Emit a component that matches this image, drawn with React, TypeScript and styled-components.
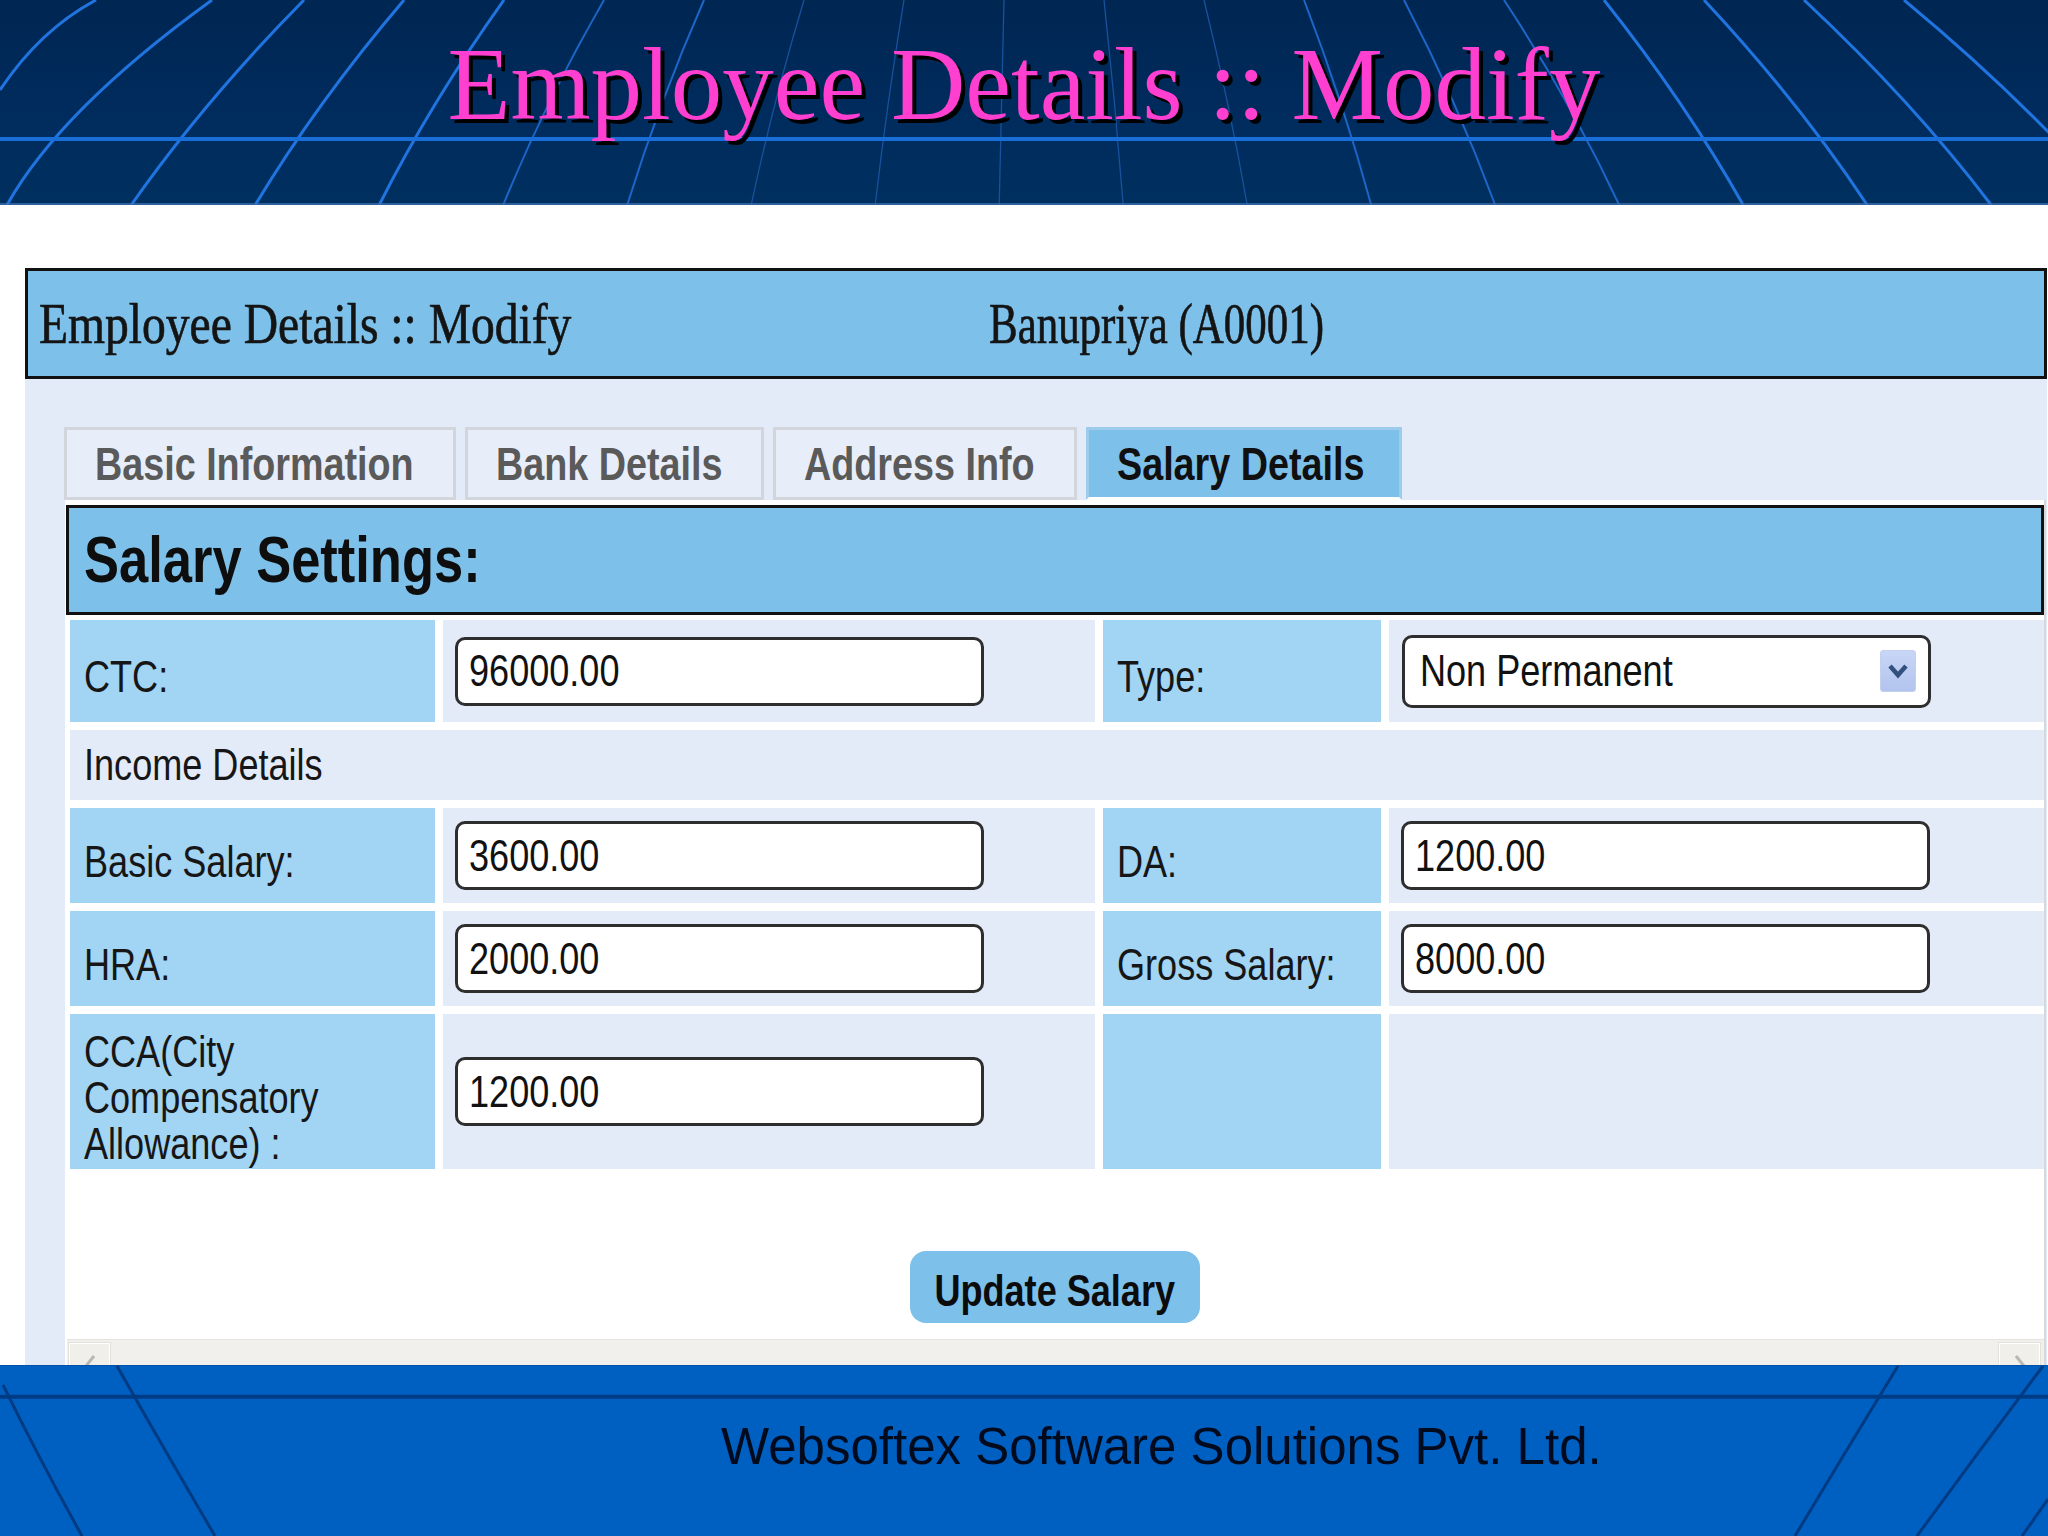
import React from 'react';
import styled, { createGlobalStyle } from 'styled-components';

const SANS = `"Liberation Sans", Arial, sans-serif`;
const SERIF = `"Liberation Serif", "Times New Roman", serif`;

const SKY = '#7dc0ea';
const LABEL_BG = '#a2d4f4';
const LAVENDER = '#e4ebf8';

const GlobalStyle = createGlobalStyle`
    html, body {
        margin: 0;
        padding: 0;
        background: #ffffff;
    }
    body {
        width: 2048px;
        height: 1536px;
        overflow: hidden;
    }
    * {
        box-sizing: border-box;
    }
`;

type Field = { label: string; value: string };

// the captured web page is stretched vertically, so its text is drawn narrower than the font
const Squeeze = styled.span<{ scale?: number; origin?: string }>`
    display: inline-block;
    white-space: nowrap;
    transform: scaleX(${(p) => p.scale ?? 0.82});
    transform-origin: ${(p) => p.origin ?? 'left center'};
`;

const headerLines = Array.from({ length: 17 }, (_, i) => i - 7).map((k) => {
    const top = 1004 + 100 * k;
    const bottom = 1024 + 1.24 * (top - 1024);
    const offset = top - 1024;
    const ctrl = (top + bottom) / 2 + offset * 0.02;
    const abs = Math.abs(offset);
    return {
        d: `M${top},0 Q${ctrl},102 ${bottom},205`,
        width: abs > 500 ? 3 : abs > 250 ? 2 : 1.3,
        color: abs > 500 ? '#1f74e0' : abs > 250 ? '#1c66c8' : '#18519c',
    };
});

const HeaderGrid = () => (
    <BandArt viewBox="0 0 2048 205" preserveAspectRatio="none">
        {headerLines.map((l) => (
            <path key={l.d} d={l.d} stroke={l.color} strokeWidth={l.width} fill="none" />
        ))}
        <path d="M212,0 Q60,110 7,205" stroke="#1f74e0" strokeWidth={3} fill="none" />
        <path d="M96,0 Q40,30 0,90" stroke="#1f74e0" strokeWidth={3} fill="none" />
        <line x1={0} y1={139} x2={2048} y2={139} stroke="#1a6ed8" strokeWidth={4} />
        <line x1={0} y1={204} x2={2048} y2={204} stroke="#3c6fb0" strokeWidth={1.5} />
    </BandArt>
);

const FooterLines = () => (
    <BandArt viewBox="0 0 2048 171" preserveAspectRatio="none">
        <line x1={0} y1={31} x2={2048} y2={31} stroke="#003c86" strokeWidth={4} />
        <path d="M3,19 Q40,95 82,171" stroke="#003a80" strokeWidth={3} fill="none" />
        <path d="M117,0 Q162,80 215,171" stroke="#003a80" strokeWidth={3} fill="none" />
        <path d="M1898,0 Q1848,82 1795,171" stroke="#003a80" strokeWidth={3} fill="none" />
        <path d="M2043,0 Q1980,84 1917,171" stroke="#003a80" strokeWidth={3} fill="none" />
        <path d="M2048,134 L2022,171" stroke="#003a80" strokeWidth={3} fill="none" />
    </BandArt>
);

const Chevron = () => (
    <svg width="22" height="18" viewBox="0 0 22 18">
        <polyline points="3,4 11,13 19,4" fill="none" stroke="#34507e" strokeWidth={4.5} strokeLinejoin="miter" />
    </svg>
);

const ScrollArrow: React.FC<{ flip?: boolean }> = ({ flip }) => (
    <svg width="20" height="20" viewBox="0 0 20 20" style={flip ? { transform: 'scaleX(-1)' } : undefined}>
        <polyline points="6,16 14,6" fill="none" stroke="#b8b8b4" strokeWidth={3} />
    </svg>
);

const FieldInput: React.FC<{ value: string }> = ({ value }) => (
    <FieldBox role="textbox" aria-readonly="true">
        <Squeeze>{value}</Squeeze>
    </FieldBox>
);

const InputRow: React.FC<{ left: Field; right?: Field; children?: React.ReactNode }> = ({
    left,
    right,
    children,
}) => (
    <>
        <LabelCell>{children ?? <Squeeze>{left.label}</Squeeze>}</LabelCell>
        <ValueCell>
            <FieldInput value={left.value} />
        </ValueCell>
        <LabelCell>{right && <Squeeze>{right.label}</Squeeze>}</LabelCell>
        <ValueCell>{right && <FieldInput value={right.value} />}</ValueCell>
    </>
);

const tabs = [
    { label: 'Basic Information', width: 392 },
    { label: 'Bank Details', width: 299 },
    { label: 'Address Info', width: 304 },
    { label: 'Salary Details', width: 316, active: true },
];

const App: React.FC = () => {
    return (
        <>
            <GlobalStyle />
            <Slide>
                <HeaderBand>
                    <HeaderGrid />
                    <SlideTitle>Employee Details :: Modify</SlideTitle>
                </HeaderBand>

                <Panel>
                    <TitleBar>
                        <TitleCell>
                            <Squeeze>Employee Details :: Modify</Squeeze>
                        </TitleCell>
                        <TitleCell>
                            <Squeeze scale={0.74}>Banupriya (A0001)</Squeeze>
                        </TitleCell>
                    </TitleBar>
                    <PanelBody>
                        <TabRow>
                            {tabs.map((t) => (
                                <Tab key={t.label} width={t.width} active={!!t.active}>
                                    <Squeeze>{t.label}</Squeeze>
                                </Tab>
                            ))}
                        </TabRow>
                        <ContentBox>
                            <SectionHeader>
                                <Squeeze>Salary Settings:</Squeeze>
                            </SectionHeader>
                            <Table>
                                <LabelCell>
                                    <Squeeze>CTC:</Squeeze>
                                </LabelCell>
                                <ValueCell>
                                    <FieldInput value="96000.00" />
                                </ValueCell>
                                <LabelCell>
                                    <Squeeze>Type:</Squeeze>
                                </LabelCell>
                                <ValueCell>
                                    <SelectBox>
                                        <Squeeze>Non Permanent</Squeeze>
                                        <SelectArrow>
                                            <Chevron />
                                        </SelectArrow>
                                    </SelectBox>
                                </ValueCell>

                                <GroupCell>
                                    <Squeeze>Income Details</Squeeze>
                                </GroupCell>

                                <InputRow
                                    left={{ label: 'Basic Salary:', value: '3600.00' }}
                                    right={{ label: 'DA:', value: '1200.00' }}
                                />
                                <InputRow
                                    left={{ label: 'HRA:', value: '2000.00' }}
                                    right={{ label: 'Gross Salary:', value: '8000.00' }}
                                />
                                <InputRow left={{ label: 'CCA(City Compensatory Allowance) :', value: '1200.00' }}>
                                    <Squeeze>
                                        CCA(City
                                        <br />
                                        Compensatory
                                        <br />
                                        Allowance) :
                                    </Squeeze>
                                </InputRow>
                            </Table>
                            <ButtonRow>
                                <UpdateButton>
                                    <Squeeze origin="center">Update Salary</Squeeze>
                                </UpdateButton>
                            </ButtonRow>
                            <ScrollStrip>
                                <ScrollButton>
                                    <ScrollArrow />
                                </ScrollButton>
                                <ScrollButton>
                                    <ScrollArrow flip />
                                </ScrollButton>
                            </ScrollStrip>
                        </ContentBox>
                    </PanelBody>
                </Panel>

                <FooterBand>
                    <FooterLines />
                    <FooterText>Websoftex Software Solutions Pvt. Ltd.</FooterText>
                </FooterBand>
            </Slide>
        </>
    );
};

const Slide = styled.div`
    width: 2048px;
    height: 1536px;
    display: flex;
    flex-direction: column;
    overflow: hidden;
    background: #ffffff;
`;

const BandArt = styled.svg`
    position: absolute;
    inset: 0;
    width: 100%;
    height: 100%;
`;

const HeaderBand = styled.div`
    position: relative;
    flex: 0 0 205px;
    background: linear-gradient(180deg, #002652 0%, #002c5e 60%, #00305f 100%);
    display: flex;
    justify-content: center;
`;

const SlideTitle = styled.h1`
    position: relative;
    margin: 0;
    padding-top: 33px;
    font-family: ${SERIF};
    font-weight: normal;
    font-size: 103px;
    line-height: 1;
    color: #ff3fd0;
    text-shadow: 4px 4px 0 #000000;
    white-space: nowrap;
`;

const Panel = styled.div`
    margin: 63px 0 0 25px;
    width: 2022px;
    flex: 0 0 1097px;
    display: flex;
    flex-direction: column;
    overflow: hidden;
`;

const TitleBar = styled.div`
    flex: 0 0 111px;
    display: flex;
    align-items: center;
    background: ${SKY};
    border: 3px solid #111111;
    padding-left: 11px;
`;

const TitleCell = styled.div`
    font-family: ${SERIF};
    font-size: 58px;
    color: #141414;
    -webkit-text-stroke: 0.7px #141414;
    white-space: nowrap;
    &:first-child {
        width: 950px;
    }
`;

const PanelBody = styled.div`
    flex: 1;
    background: ${LAVENDER};
    padding-left: 40px;
    display: flex;
    flex-direction: column;
`;

const TabRow = styled.div`
    display: flex;
    gap: 9px;
    margin: 48px 0 0 -1px;
    height: 73px;
`;

const Tab = styled.div<{ width: number; active: boolean }>`
    width: ${(p) => p.width}px;
    display: flex;
    align-items: center;
    padding-left: 28px;
    font-family: ${SANS};
    font-weight: bold;
    font-size: 46px;
    color: ${(p) => (p.active ? '#101010' : '#5a5a5a')};
    background: ${(p) => (p.active ? SKY : '#e8eef9')};
    border: 3px solid ${(p) => (p.active ? '#9ccbec' : '#d2d6dc')};
    border-bottom: 3px solid ${(p) => (p.active ? '#ffffff' : '#d2d6dc')};
`;

const ContentBox = styled.div`
    flex: 1;
    width: 1981px;
    background: #ffffff;
    border-right: 2px solid #d8d8d8;
    display: flex;
    flex-direction: column;
`;

const SectionHeader = styled.div`
    margin: 5px 0 0 1px;
    height: 110px;
    display: flex;
    align-items: center;
    padding-left: 15px;
    background: ${SKY};
    border: 3px solid #111111;
    font-family: ${SANS};
    font-weight: bold;
    font-size: 64px;
    color: #0e0e0e;
`;

const Table = styled.div`
    display: grid;
    grid-template-columns: 365px 652px 278px 655px;
    grid-template-rows: 102px 70px 95px 95px 155px;
    gap: 8px;
    padding: 5px 4px 0 5px;
`;

const CellBase = styled.div`
    display: flex;
    align-items: center;
    font-family: ${SANS};
    font-size: 44px;
    color: #161616;
`;

const LabelCell = styled(CellBase)`
    background: ${LABEL_BG};
    padding: 12px 0 0 14px;
    line-height: 46px;
`;

const ValueCell = styled(CellBase)`
    background: ${LAVENDER};
    padding-left: 12px;
`;

const GroupCell = styled(CellBase)`
    grid-column: 1 / -1;
    background: ${LAVENDER};
    padding-left: 14px;
`;

const FieldBox = styled.div`
    width: 529px;
    height: 69px;
    border: 3px solid #2e2e2e;
    border-radius: 10px;
    background: #ffffff;
    padding: 0 11px;
    display: flex;
    align-items: center;
    font-family: ${SANS};
    font-size: 44px;
    color: #111111;
`;

const SelectBox = styled.div`
    width: 529px;
    height: 73px;
    margin-left: 1px;
    border: 3px solid #2e2e2e;
    border-radius: 10px;
    background: #ffffff;
    display: flex;
    align-items: center;
    justify-content: space-between;
    padding: 0 12px 0 15px;
    font-family: ${SANS};
    font-size: 44px;
    color: #111111;
`;

const SelectArrow = styled.div`
    width: 36px;
    height: 42px;
    border-radius: 3px;
    background: linear-gradient(180deg, #c8d6f6 0%, #b2c4ee 100%);
    border: 1px solid #c2cff0;
    display: flex;
    align-items: center;
    justify-content: center;
`;

const ButtonRow = styled.div`
    display: flex;
    justify-content: center;
    padding: 82px 0 16px;
`;

const UpdateButton = styled.button`
    width: 290px;
    height: 72px;
    border: none;
    border-radius: 16px;
    background: ${SKY};
    font-family: ${SANS};
    font-weight: bold;
    font-size: 44px;
    color: #0c0c0c;
    padding: 8px 0 0;
    display: flex;
    align-items: center;
    justify-content: center;
`;

const ScrollStrip = styled.div`
    height: 40px;
    margin-left: 2px;
    background: #f1f0ec;
    border-top: 1px solid #e4e3de;
    display: flex;
    justify-content: space-between;
    padding: 3px 4px 0 2px;
`;

const ScrollButton = styled.div`
    width: 41px;
    height: 36px;
    background: #f0efea;
    border: 1px solid #ffffff;
    box-shadow: 0 0 0 1px #e2e1dc;
    display: flex;
    align-items: flex-start;
    justify-content: center;
    padding-top: 6px;
`;

const FooterBand = styled.div`
    position: relative;
    flex: 0 0 171px;
    background: #0060c2;
    border-top: 1px solid #0050a8;
`;

const FooterText = styled.div`
    position: relative;
    padding: 55px 0 0 721px;
    font-family: ${SANS};
    font-size: 51px;
    line-height: 1;
    color: #020a1e;
    white-space: nowrap;
`;

export default App;
